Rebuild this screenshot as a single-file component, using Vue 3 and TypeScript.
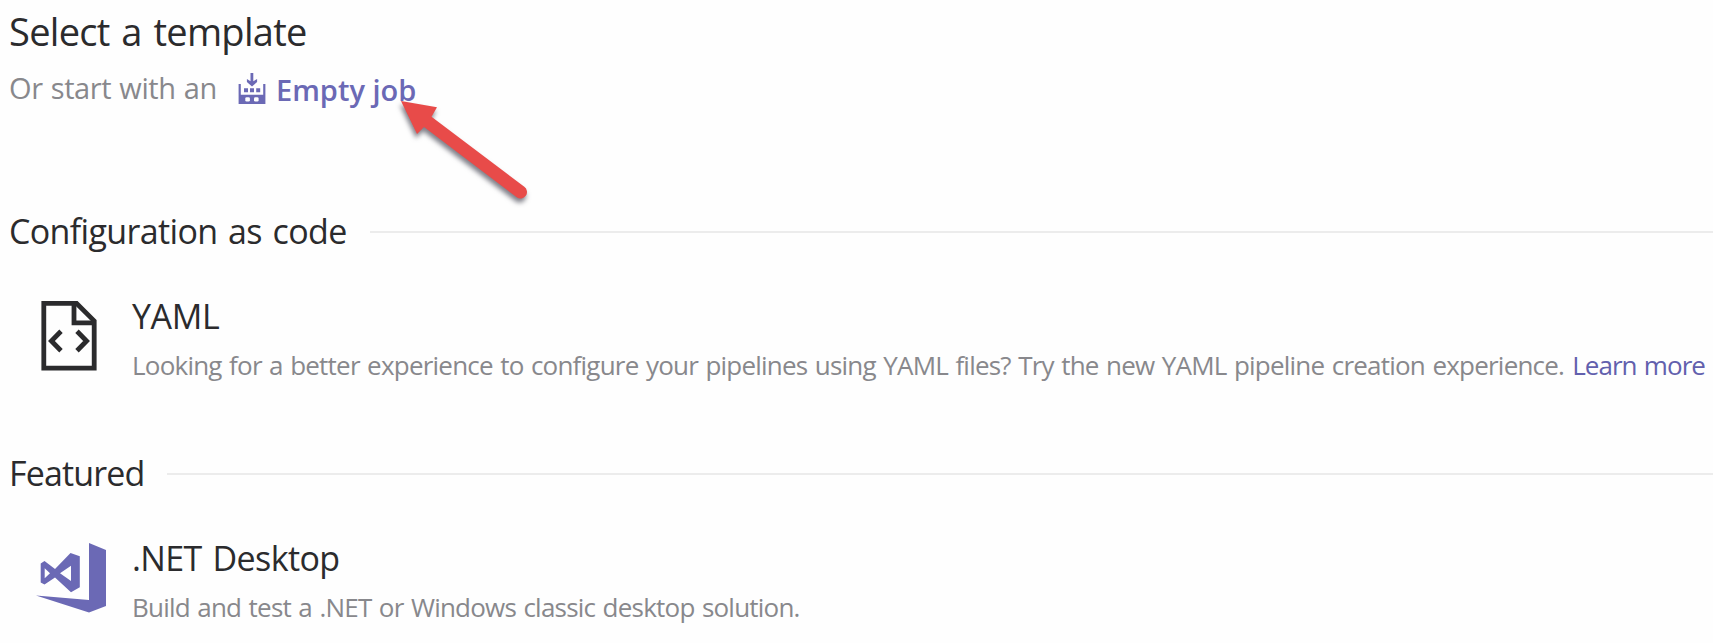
<script setup lang="ts">
interface Template {
  id: string
  name: string
  description: string
  link?: string
}

interface Section {
  id: string
  title: string
  items: Template[]
}

const sections: Section[] = [
  {
    id: 'code',
    title: 'Configuration as code',
    items: [
      {
        id: 'yaml',
        name: 'YAML',
        description:
          'Looking for a better experience to configure your pipelines using YAML files? Try the new YAML pipeline creation experience.',
        link: 'Learn more',
      },
    ],
  },
  {
    id: 'featured',
    title: 'Featured',
    items: [
      {
        id: 'net',
        name: '.NET Desktop',
        description: 'Build and test a .NET or Windows classic desktop solution.',
      },
    ],
  },
]
</script>

<template>
  <main class="page">
    <h1 class="title"><span>Select a template</span></h1>
    <p class="start">
      <span class="lead">Or start with an</span>
      <svg class="job-icon" viewBox="0 0 28 32" width="28" height="32">
        <path d="M12.5 0h2.8v8.2l3.8-2.2v3L14 13.4 8.9 9V6l3.6 2.2z" />
        <path d="M.6 11h2.2v10.8h22.4V11h2.2v20H.6z" />
        <path d="M6 15.3h4v4H6zM12 15.3h4v4h-4zM18.2 15.3h4v4h-4z" />
        <g class="hole">
          <rect x="7.3" y="24.2" width="4.6" height="4.4" rx="1.4" />
          <rect x="16" y="24.2" width="4.6" height="4.4" rx="1.4" />
        </g>
      </svg>
      <a class="empty-job">Empty job</a>
    </p>

    <section v-for="s in sections" :key="s.id" class="section" :class="s.id">
      <header class="head">
        <h2>{{ s.title }}</h2>
        <div class="rule"></div>
      </header>
      <article v-for="t in s.items" :key="t.id" class="item" :class="t.id">
        <div class="icon">
          <svg v-if="t.id === 'yaml'" viewBox="0 0 56 70" width="56" height="70">
            <path class="line" d="M2.8 2.3h32.7l17.7 17.6v47.3H2.8z" />
            <path class="line" d="M33 2.3v19.5h20" />
            <path class="line" d="M20 30.2 10.4 40 20 49.8M36 30.2l9.6 9.8-9.6 9.8" />
          </svg>
          <svg v-else class="vs" viewBox="0 0 71 70" width="71" height="70">
            <path d="M53 0l17 7v56l-17 6.5L0 52.5l53 4.5z" />
            <path
              fill-rule="evenodd"
              d="M4.7 20.5 8.5 18 19 26 34.5 10l9.3 3.3v31L35 49.3 19 34.5 8.5 41.5l-3.8-2zM8.7 25.3v10L14 30.3zM24 30.3 35 38V22.7z"
            />
          </svg>
        </div>
        <div class="body">
          <h3><span>{{ t.name }}</span></h3>
          <p class="desc">
            <span>{{ t.description }}</span>
            <a v-if="t.link">{{ t.link }}</a>
          </p>
        </div>
      </article>
    </section>

    <svg class="pointer" viewBox="0 0 150 120" width="150" height="120">
      <path
        d="M6 6 42 12.2 36.5 21.8 129.3 91.8A6.2 6.2 0 0 1 121.7 102.3L29 32 22 39z"
      />
    </svg>
  </main>
</template>

<style>
body {
  background: #fefefe;
}
</style>

<style scoped>
.page {
  position: relative;
  width: 1713px;
  height: 643px;
  overflow: hidden;
  background: #fefefe;
  color: #2b2b2d;
  font-family: 'Open Sans', 'Noto Sans', sans-serif;
  white-space: nowrap;
}
h1,
h2,
h3,
p {
  margin: 0;
  font-weight: 400;
}
.title {
  padding-left: 9px;
  font-size: 38px;
  letter-spacing: -0.7px;
  word-spacing: 2.5px;
  line-height: 62px;
}
.start {
  display: flex;
  align-items: center;
  height: 50px;
  margin-top: 4px;
  padding-left: 9px;
  color: #88888c;
  font-size: 29px;
  line-height: 44px;
}
.lead {
  flex: none;
  width: 229px;
  padding-bottom: 6px;
  letter-spacing: -0.4px;
  word-spacing: 1px;
}
.job-icon {
  flex: none;
  margin-top: -4px;
  fill: #6b69b5;
}
.job-icon .hole {
  fill: #fefefe;
}
.empty-job {
  margin-left: 10px;
  padding-bottom: 2px;
  color: #6b69b5;
  font-weight: 600;
}
.section {
  height: 242px;
}
.code {
  margin-top: 91px;
}
.head {
  display: flex;
  align-items: center;
  height: 48px;
  padding-left: 9px;
}
h2,
h3 {
  font-size: 34px;
  letter-spacing: -0.65px;
  word-spacing: 2.5px;
  line-height: 48px;
}
.code h2 {
  width: 361px;
}
.featured h2 {
  width: 158px;
  letter-spacing: -0.85px;
}
.rule {
  flex: 1;
  height: 2px;
  margin-top: 2px;
  background: #ececec;
}
.item {
  display: flex;
  margin-top: 36px;
}
.icon {
  flex: none;
  width: 132px;
  padding-top: 10px;
  box-sizing: border-box;
}
.yaml .icon {
  padding-left: 41px;
}
.net .icon {
  padding-left: 36px;
}
.icon svg {
  display: block;
}
.line {
  fill: none;
  stroke: #2b2b2d;
  stroke-width: 4.8;
}
.vs {
  fill: #6b69b5;
}
h3 {
  padding-top: 1px;
  letter-spacing: -0.6px;
}
.yaml h3 {
  letter-spacing: -0.4px;
}
.desc {
  display: flex;
  margin-top: 1px;
  color: #88888c;
  font-size: 26px;
  letter-spacing: -0.78px;
  word-spacing: 1.4px;
  line-height: 48px;
}
.desc a {
  margin-left: 8px;
  color: #6260ad;
  letter-spacing: -0.95px;
}
.pointer {
  position: absolute;
  left: 395px;
  top: 95px;
  fill: #e84b49;
  filter: drop-shadow(-1px 4px 2.5px rgba(40, 40, 55, 0.6));
}
</style>
